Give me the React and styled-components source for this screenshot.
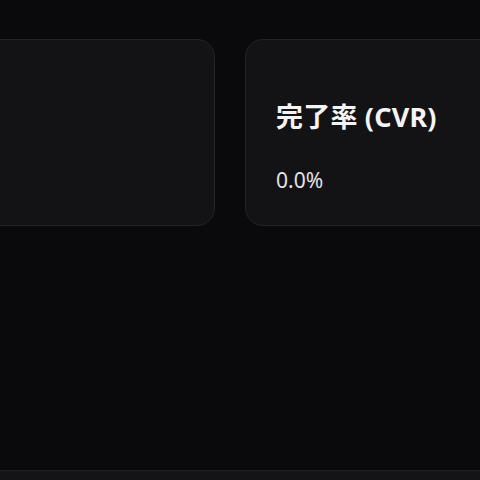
import styled, { createGlobalStyle } from 'styled-components';

const GlobalStyle = createGlobalStyle`
  html, body {
    margin: 0;
    padding: 0;
    background: #0a0a0c;
    overflow: hidden;
  }
  body {
    font-family: 'Noto Sans', 'Noto Sans CJK JP', sans-serif;
    color: #f2f2f4;
  }
`;

const Page = styled.div`
  display: flex;
  flex-direction: column;
  width: 480px;
  height: 480px;
  overflow: hidden;
`;

const Main = styled.main`
  height: 470px;
  flex-shrink: 0;
  padding-top: 39px;
  box-sizing: border-box;
`;

const StatRow = styled.div`
  display: flex;
  gap: 30px;
  margin-left: -185px;
`;

const StatCard = styled.section`
  flex: 0 0 400px;
  height: 187px;
  box-sizing: border-box;
  padding: 60px 30px 0 30px;
  background: #131315;
  border: 1px solid #242427;
  border-radius: 18px;
`;

const StatTitle = styled.h3`
  margin: 0;
  font-family: 'Noto Sans', 'Noto Sans CJK JP', sans-serif;
  font-size: 27px;
  font-weight: 700;
  letter-spacing: 0.2px;
  line-height: 34px;
  color: #f4f4f6;
`;

const StatValue = styled.p`
  margin: 32px 0 0;
  font-family: 'Noto Sans', 'Noto Sans CJK JP', sans-serif;
  font-size: 21px;
  font-weight: 400;
  line-height: 28px;
  color: #e4e4e6;
`;

const Footer = styled.footer`
  flex: 1;
  background: #141416;
  border-top: 1px solid #202023;
`;

const stats = [
  { id: 'sessions', title: '', value: '' },
  { id: 'cvr', title: '完了率 (CVR)', value: '0.0%' },
];

export default function App() {
  return (
    <>
      <GlobalStyle />
      <Page>
        <Main>
          <StatRow>
            {stats.map((s) => (
              <StatCard key={s.id}>
                {s.title && <StatTitle>{s.title}</StatTitle>}
                {s.value && <StatValue>{s.value}</StatValue>}
              </StatCard>
            ))}
          </StatRow>
        </Main>
        <Footer />
      </Page>
    </>
  );
}
